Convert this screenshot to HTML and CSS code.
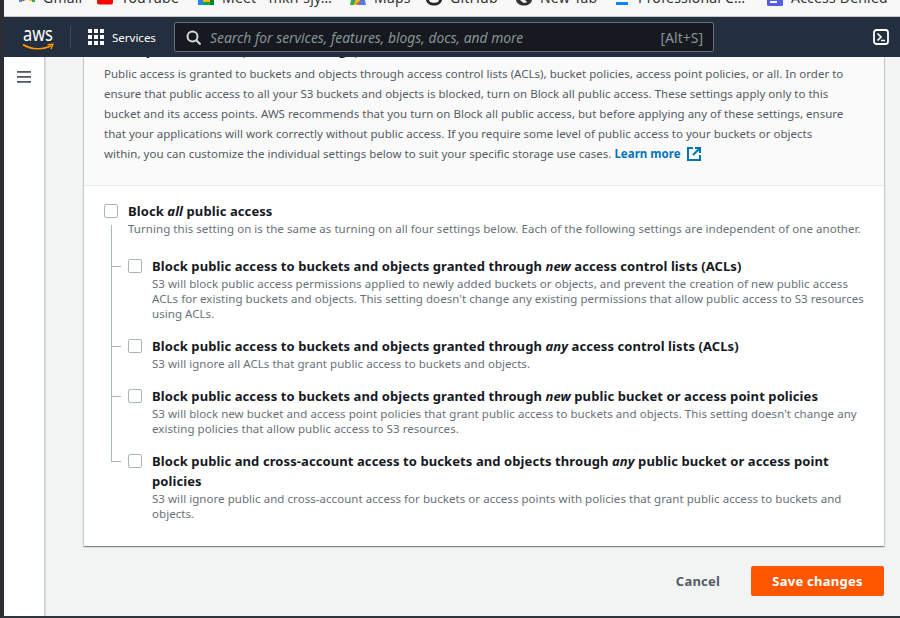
FILE: index.html
```html
<!DOCTYPE html>
<html lang="en">
<head>
<meta charset="utf-8">
<title>Block public access</title>
<link rel="stylesheet" href="styles.css">
</head>
<body>
<div class="frame">
  <div class="bookmarks">
    <div class="bm bm-gmail"><svg class="bm-icon" viewBox="0 0 16 6"><path d="M0 0h3v2H0z" fill="#4285f4"/><path d="M3 0h2l1 1H3z" fill="#ea4335"/><path d="M10 0h3v1h-3z" fill="#fbbc04"/><path d="M13 0h3v2h-3z" fill="#34a853"/></svg><span>Gmail</span></div>
    <div class="bm bm-yt"><svg class="bm-icon" viewBox="0 0 16 6"><path d="M0 0h16v2.500a2 2 0 0 1-2 2H2a2 2 0 0 1-2-2z" fill="#f00"/></svg><span>YouTube</span></div>
    <div class="bm bm-meet"><svg class="bm-icon" viewBox="0 0 16 6"><rect width="5" height="5" fill="#2684fc"/><rect x="5" width="7" height="2" fill="#ffba00"/><rect x="5" y="2" width="7" height="3" fill="#00ac47"/><rect x="12" width="4" height="5" fill="#00832d"/></svg><span>Meet - mkn-sjy…</span></div>
    <div class="bm bm-maps"><svg class="bm-icon" viewBox="0 0 16 6"><path d="M1 0h5l-2 5H0z" fill="#34a853"/><path d="M6 0h4l-3 5H4z" fill="#fbbc04"/><path d="M10 0h5l1 5H7z" fill="#4285f4"/><path d="M5 3l7-3h2L8 5z" fill="#ea4335" opacity=".5"/></svg><span>Maps</span></div>
    <div class="bm bm-gh"><svg class="bm-icon" viewBox="0 0 16 6"><path d="M0 0c.5 3.500 4 5.500 8 5.500S15.500 3.500 16 0h-3l-1 2c-2 1-6 1-8 0L3 0z" fill="#24292e"/></svg><span>GitHub</span></div>
    <div class="bm bm-new"><svg class="bm-icon" viewBox="0 0 16 6"><path d="M0 0c.5 3.500 4 5.500 8 5.500S15.500 3.500 16 0H9l2 2c-1 1-3 1-4 .5L4 0z" fill="#333"/></svg><span>New Tab</span></div>
    <div class="bm bm-pro"><svg class="bm-icon" viewBox="0 0 16 6"><rect x="2" y="2" width="12" height="3" fill="#0a84ff"/></svg><span>Professional C…</span></div>
    <div class="bm bm-ad"><svg class="bm-icon" viewBox="0 0 16 6"><path d="M0 0h16v4.500a1.500 1.500 0 0 1-1.500 1.500h-13A1.500 1.500 0 0 1 0 4.500z" fill="#4f5fe8"/><rect x="3" y="1" width="7" height="2" fill="#fff"/></svg><span>Access Denied</span></div>
  </div>
  <header class="nav">
    <div class="logo">
      <span class="logo-text">aws</span>
      <svg class="logo-smile" viewBox="0 0 32 8"><path d="M1 1.500C8 6.500 21 7.200 29 2.800" fill="none" stroke="#f90" stroke-width="1.600"/><path d="M25.500 1.600L31 1.200 29 6" fill="none" stroke="#f90" stroke-width="1.400"/></svg>
    </div>
    <div class="nav-sep"></div>
    <svg class="grid-icon" viewBox="0 0 16 16" fill="#fff"><rect width="4" height="4"/><rect x="6" width="4" height="4"/><rect x="12" width="4" height="4"/><rect y="6" width="4" height="4"/><rect x="6" y="6" width="4" height="4"/><rect x="12" y="6" width="4" height="4"/><rect y="12" width="4" height="4"/><rect x="6" y="12" width="4" height="4"/><rect x="12" y="12" width="4" height="4"/></svg>
    <span class="services">Services</span>
    <div class="search">
      <svg class="search-icon" viewBox="0 0 15 15" fill="none" stroke="#d5dbdb" stroke-width="2"><circle cx="6.500" cy="6.500" r="5"/><path d="M10 10l4.500 4.500"/></svg>
      <span class="search-text">Search for services, features, blogs, docs, and more</span>
      <span class="search-key">[Alt+S]</span>
    </div>
    <svg class="shell-icon" viewBox="0 0 16 16" fill="none" stroke="#fff"><rect x="1" y="1" width="14" height="14" rx="2.500" stroke-width="1.800"/><path d="M4.500 4.500L8 8l-3.500 3.500M8 11.500h4" stroke-width="1.700"/></svg>
  </header>
  <div class="body">
    <aside class="side">
      <svg class="menu-icon" viewBox="0 0 14 12" fill="#545b64"><rect width="14" height="1.800"/><rect y="5" width="14" height="1.800"/><rect y="10" width="14" height="1.800"/></svg>
    </aside>
    <main class="main">
      <section class="card">
        <div class="card-head">
          <h2 class="clip-title">Block public access (bucket settings)</h2>
          <p class="intro">Public access is granted to buckets and objects through access control lists (ACLs), bucket policies, access point policies, or all. In order to ensure that public access to all your S3 buckets and objects is blocked, turn on Block all public access. These settings apply only to this bucket and its access points. AWS recommends that you turn on Block all public access, but before applying any of these settings, ensure that your applications will work correctly without public access. If you require some level of public access to your buckets or objects within, you can customize the individual settings below to suit your specific storage use cases. <a class="learn">Learn more<svg class="ext" viewBox="0 0 14 14" fill="none" stroke="#0073bb" stroke-width="2"><path d="M6 1H1v12h12V8"/><path d="M8 1h5v5M13 1L6 8"/></svg></a></p>
        </div>
        <div class="card-body">
          <div class="opt opt-all">
            <span class="box"></span>
            <div class="opt-text">
              <div class="opt-title">Block <em>all</em> public access</div>
              <div class="opt-desc">Turning this setting on is the same as turning on all four settings below. Each of the following settings are independent of one another.</div>
            </div>
          </div>
          <div class="tree">
            <div class="opt sub">
              <span class="box"></span>
              <div class="opt-text">
                <div class="opt-title">Block public access to buckets and objects granted through <em>new</em> access control lists (ACLs)</div>
                <div class="opt-desc">S3 will block public access permissions applied to newly added buckets or objects, and prevent the creation of new public access ACLs for existing buckets and objects. This setting doesn't change any existing permissions that allow public access to S3 resources using ACLs.</div>
              </div>
            </div>
            <div class="opt sub">
              <span class="box"></span>
              <div class="opt-text">
                <div class="opt-title">Block public access to buckets and objects granted through <em>any</em> access control lists (ACLs)</div>
                <div class="opt-desc">S3 will ignore all ACLs that grant public access to buckets and objects.</div>
              </div>
            </div>
            <div class="opt sub">
              <span class="box"></span>
              <div class="opt-text">
                <div class="opt-title">Block public access to buckets and objects granted through <em>new</em> public bucket or access point policies</div>
                <div class="opt-desc">S3 will block new bucket and access point policies that grant public access to buckets and objects. This setting doesn't change any existing policies that allow public access to S3 resources.</div>
              </div>
            </div>
            <div class="opt sub">
              <span class="box"></span>
              <div class="opt-text">
                <div class="opt-title">Block public and cross-account access to buckets and objects through <em>any</em> public bucket or access point policies</div>
                <div class="opt-desc">S3 will ignore public and cross-account access for buckets or access points with policies that grant public access to buckets and objects.</div>
              </div>
            </div>
          </div>
        </div>
      </section>
      <div class="actions">
        <span class="cancel">Cancel</span>
        <span class="save">Save changes</span>
      </div>
    </main>
  </div>
</div>
</body>
</html>
```
FILE: styles.css
```css
* { box-sizing: border-box; }
html, body { margin: 0; padding: 0; height: 100%; overflow: hidden; background: #f2f3f3; }
body { font-family: "Noto Sans", sans-serif; color: #16191f; }
.frame { width: 900px; height: 618px; display: flex; flex-direction: column; overflow: hidden; border-left: 4px solid #2c2c34; border-bottom: 2px solid #2f3640; }
.bookmarks { height: 17px; flex: none; background: #f8f8f8; border-bottom: 1px solid #c8c8c8; display: flex; overflow: hidden; font-size: 14px; letter-spacing: .2px; color: #333; }
.bm { display: flex; gap: 8px; height: 16px; align-items: flex-start; flex: none; line-height: 16px; }
.bm span { margin-top: -10px; white-space: nowrap; }
.bm-icon { width: 16px; height: 6px; flex: none; }
.bm-gmail { width: 93px; padding-left: 15px; }
.bm-yt { width: 101px; }
.bm-meet { width: 152px; }
.bm-maps { width: 76px; }
.bm-gh { width: 90px; }
.bm-new { width: 98px; }
.bm-pro { width: 153px; }
.nav { height: 40px; flex: none; background: #232f3e; display: flex; align-items: center; color: #fff; }
.logo { width: 32px; margin-left: 18px; height: 30px; position: relative; flex: none; }
.logo-text { position: absolute; left: 1px; top: 0; font-size: 20px; line-height: 24px; transform: scaleX(.82); transform-origin: left center; }
.logo-smile { position: absolute; left: 0; top: 21px; width: 32px; height: 8px; }
.nav-sep { width: 1px; height: 22px; background: #414d5c; margin-left: 16px; }
.grid-icon { width: 16px; height: 16px; margin-left: 17px; flex: none; }
.services { font-size: 11.500px; margin-left: 8px; width: 58px; flex: none; }
.search { width: 540px; height: 30px; margin-left: 4px; background: #16191f; border: 1px solid #687078; border-radius: 2px; display: flex; align-items: center; flex: none; }
.search-icon { width: 15px; height: 15px; margin-left: 11px; flex: none; }
.search-text { margin-left: 9px; font-size: 13.850px; font-style: italic; color: #879596; flex: 1; }
.search-key { font-size: 14px; color: #879596; margin-right: 10px; }
.shell-icon { width: 16px; height: 16px; margin-left: 159px; flex: none; }
.body { flex: 1; display: flex; min-height: 0; }
.side { width: 41px; flex: none; background: #fff; border-right: 1px solid #c5cbcb; box-shadow: 1px 0 1px rgba(0,0,0,.08); }
.menu-icon { display: block; width: 14px; height: 12px; margin: 14px 0 0 13px; }
.main { flex: 1; min-width: 0; padding: 0 16px 0 39px; }
.card { background: #fff; box-shadow: 0 1px 1px 0 rgba(0,28,36,.3), 1px 1px 1px 0 rgba(0,28,36,.15), -1px 1px 1px 0 rgba(0,28,36,.15); height: 489px; }
.card-head { height: 129px; background: #fafafa; border-bottom: 1px solid #eaeded; padding: 0 34px 0 20px; overflow: hidden; }
.clip-title { margin: -17px 0 0; height: 24px; font-size: 14px; line-height: 20px; font-weight: 700; }
.intro { margin: 0; font-size: 11.500px; line-height: 20px; letter-spacing: .015px; color: #545b64; }
.learn { color: #0073bb; font-weight: 700; }
.ext { width: 14px; height: 14px; margin-left: 6px; vertical-align: -3px; }
.card-body { padding: 15px 20px 0; }
.opt { display: flex; }
.box { width: 14px; height: 14px; flex: none; border: 1px solid #aab7b8; border-radius: 2px; background: #fff; margin-top: 3px; }
.opt-text { margin-left: 10px; flex: 1; }
.opt-title { font-size: 13px; line-height: 20px; letter-spacing: .09px; font-weight: 700; }
.opt-desc { font-size: 11.500px; line-height: 15px; letter-spacing: .05px; color: #687078; }
.tree { margin-top: 20px; margin-left: 24px; position: relative; display: flex; flex-direction: column; gap: 15px; }
.tree::before { content: ""; position: absolute; left: -17px; top: -31px; width: 1px; height: 237px; background: #aab7b8; }
.sub { position: relative; }
.sub::before { content: ""; position: absolute; left: -17px; top: 10px; width: 10px; height: 1px; background: #aab7b8; }
.actions { display: flex; justify-content: flex-end; align-items: center; margin-top: 20px; }
.cancel { font-size: 13px; letter-spacing: .2px; font-weight: 700; color: #545b64; margin-right: 31px; }
.save { width: 133px; height: 30px; background: #ff5700; color: #fff; border-radius: 2px; font-size: 13px; letter-spacing: .25px; font-weight: 700; display: flex; align-items: center; justify-content: center; }
```
